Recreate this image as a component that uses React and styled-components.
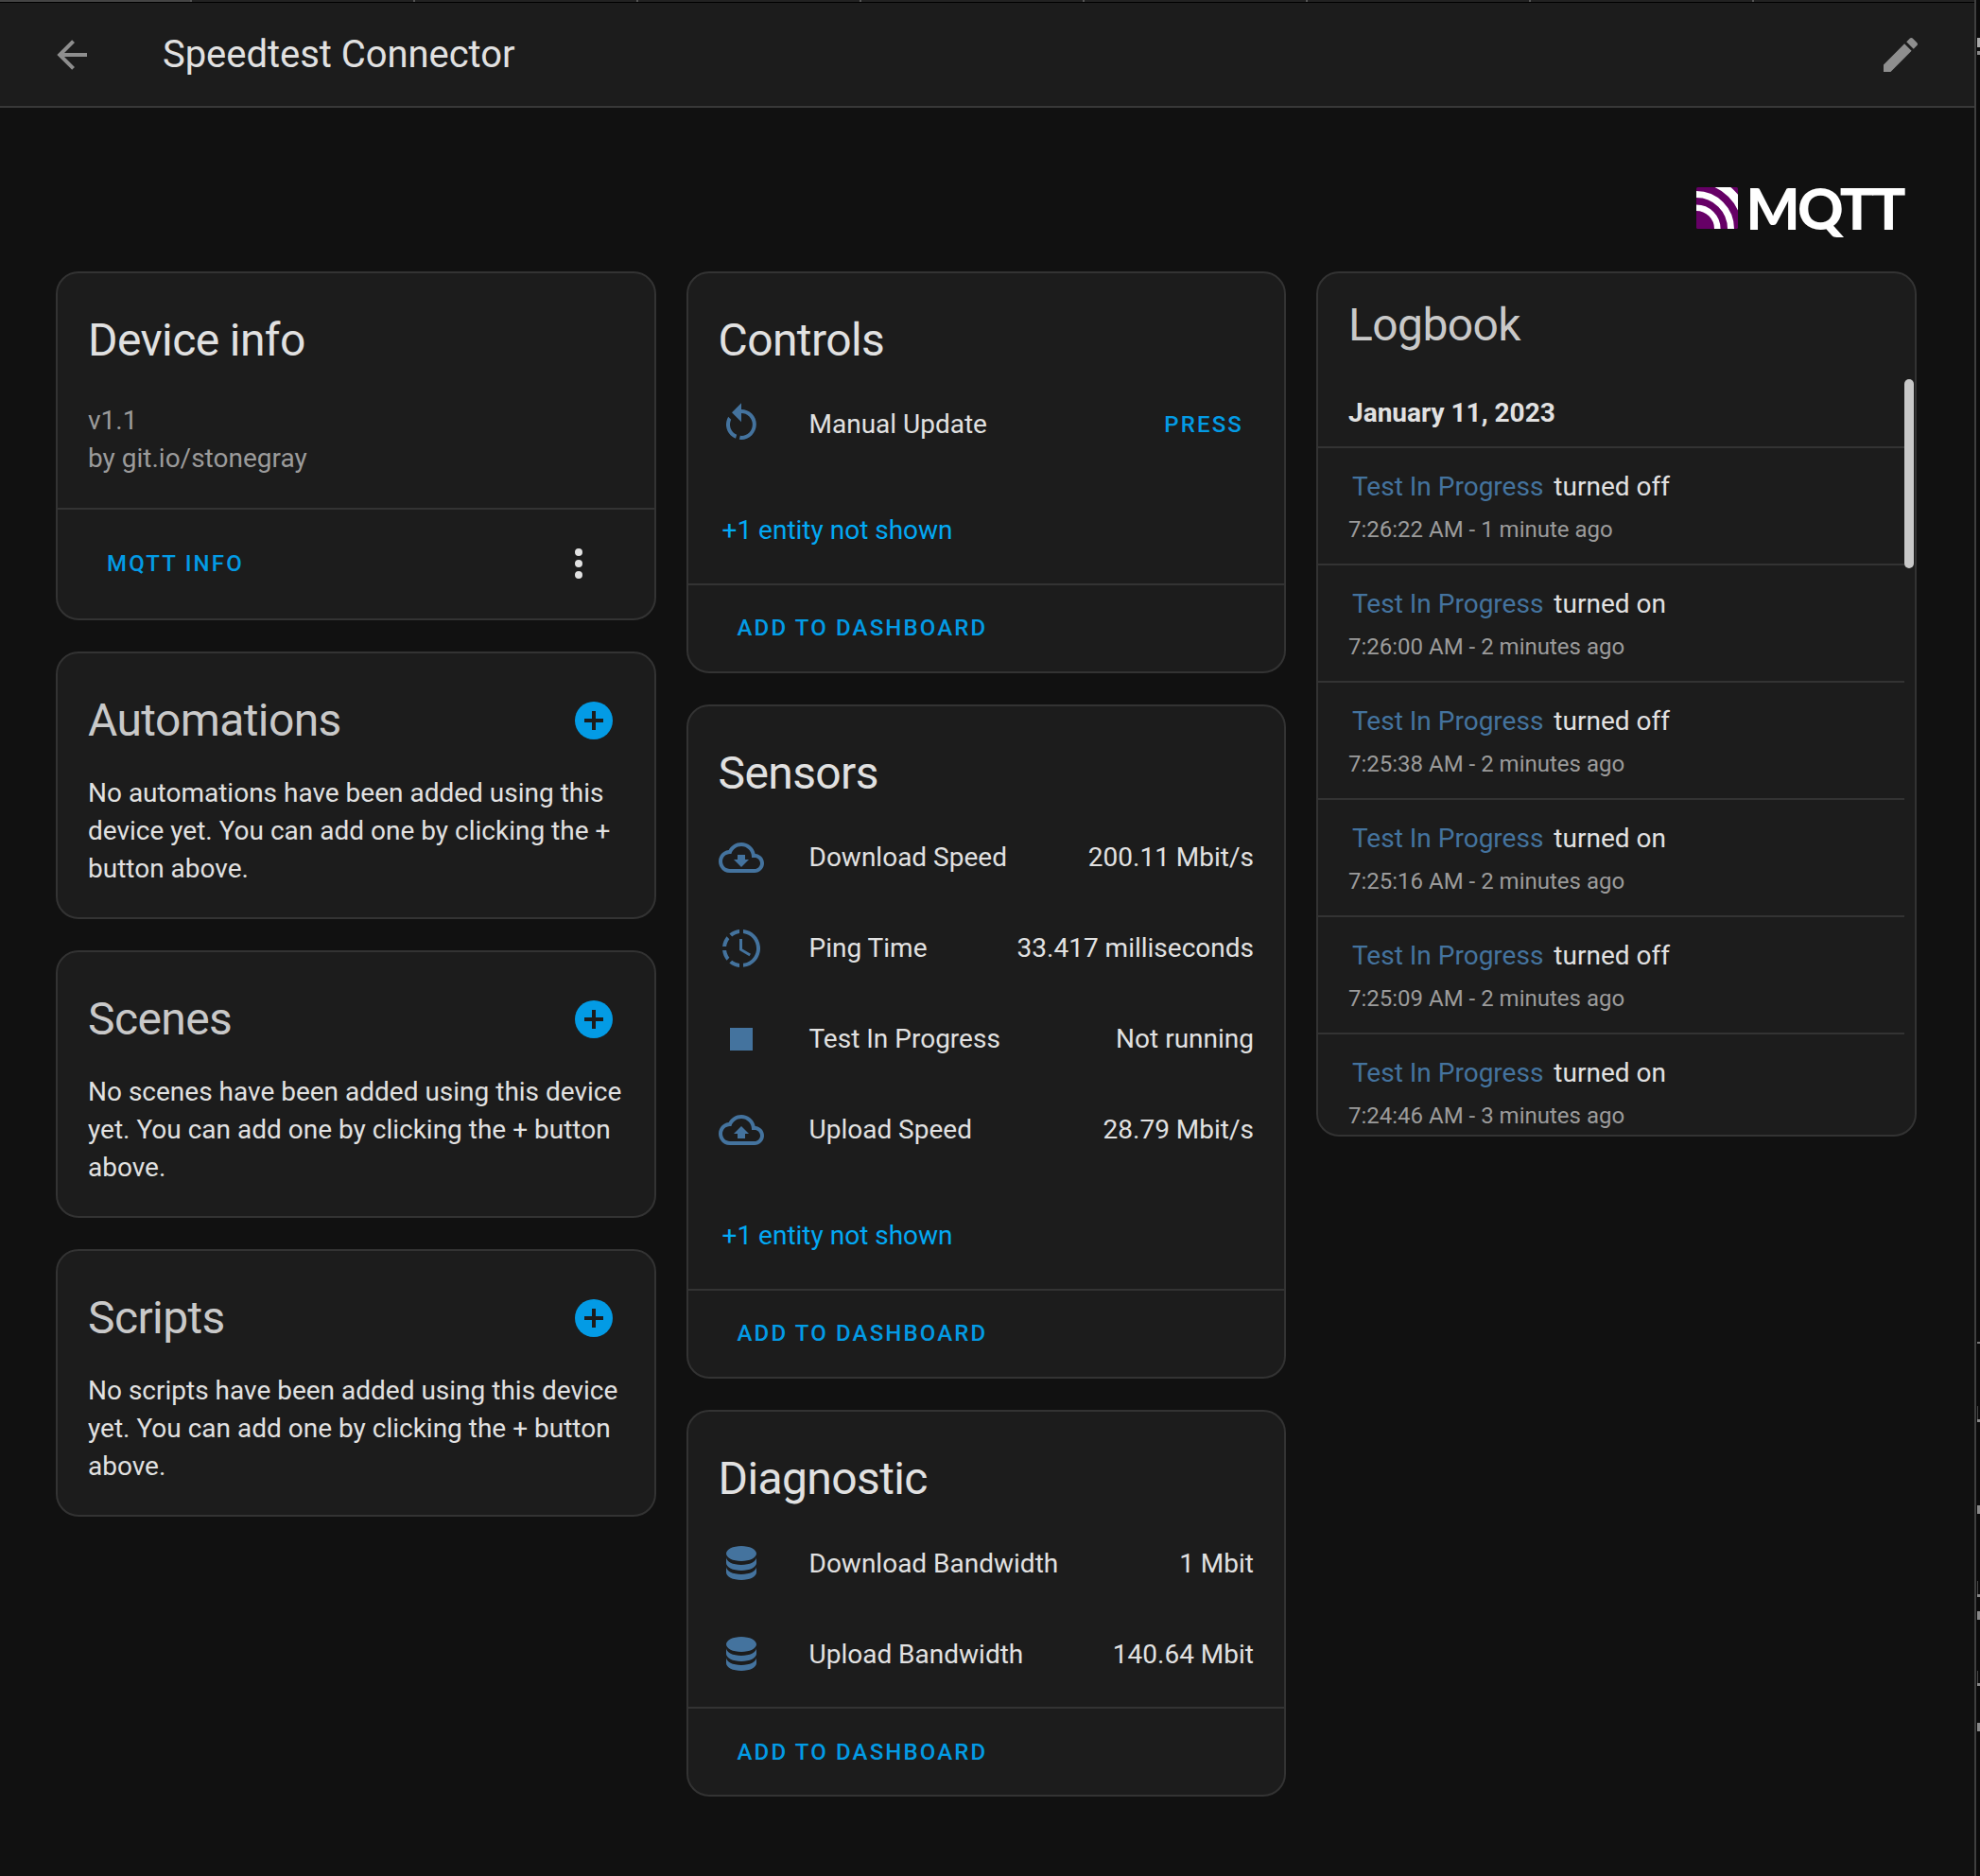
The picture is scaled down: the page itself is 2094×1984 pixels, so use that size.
import React from "react";
import styled, { createGlobalStyle } from "styled-components";

const Global = createGlobalStyle`
  html, body { margin: 0; padding: 0; background: #111111; }
  body { font-family: Roboto, "Liberation Sans", sans-serif; color: #e1e1e1; }
  * { box-sizing: border-box; }
`;

const P = {
  back: "M20,11V13H8L13.5,18.5L12.08,19.92L4.16,12L12.08,4.08L13.5,5.5L8,11H20Z",
  pencil: "M20.71,7.04C21.1,6.65 21.1,6 20.71,5.63L18.37,3.29C18,2.9 17.35,2.9 16.96,3.29L15.12,5.12L18.87,8.87M3,17.25V21H6.75L17.81,9.93L14.06,6.18L3,17.25Z",
  dots: "M12,16A2,2 0 0,1 14,18A2,2 0 0,1 12,20A2,2 0 0,1 10,18A2,2 0 0,1 12,16M12,10A2,2 0 0,1 14,12A2,2 0 0,1 12,14A2,2 0 0,1 10,12A2,2 0 0,1 12,10M12,4A2,2 0 0,1 14,6A2,2 0 0,1 12,8A2,2 0 0,1 10,6A2,2 0 0,1 12,4Z",
  restart: "M12,4C14.1,4 16.1,4.8 17.6,6.3C20.7,9.4 20.7,14.5 17.6,17.6C15.8,19.5 13.3,20.2 10.9,19.9L11.4,17.9C13.1,18.1 14.9,17.5 16.2,16.2C18.5,13.9 18.5,10.1 16.2,7.7C15.1,6.6 13.5,6 12,6V10.6L7,5.6L12,0.6V4M6.3,17.6C3.7,15 3.3,11 5.1,7.9L6.6,9.4C5.5,11.6 5.9,14.4 7.8,16.2C8.3,16.7 8.9,17.1 9.6,17.4L9,19.4C8,19 7.1,18.4 6.3,17.6Z",
  cloudDown: "M19.35 10.04C18.67 6.59 15.65 4 12 4C9.11 4 6.6 5.64 5.35 8.04C2.34 8.36 0 10.91 0 14C0 17.31 2.69 20 6 20H19C21.76 20 24 17.76 24 15C24 12.36 21.95 10.22 19.35 10.04M19 18H6C3.79 18 2 16.21 2 14S3.79 10 6 10H6.71C7.37 7.69 9.5 6 12 6C15.04 6 17.5 8.46 17.5 11.5V12H19C20.66 12 22 13.34 22 15S20.66 18 19 18M14 10.5H10V13H8L12 17L16 13H14V10.5Z",
  cloudUp: "M19.35 10.04C18.67 6.59 15.65 4 12 4C9.11 4 6.6 5.64 5.35 8.04C2.34 8.36 0 10.91 0 14C0 17.31 2.69 20 6 20H19C21.76 20 24 17.76 24 15C24 12.36 21.95 10.22 19.35 10.04M19 18H6C3.79 18 2 16.21 2 14S3.79 10 6 10H6.71C7.37 7.69 9.5 6 12 6C15.04 6 17.5 8.46 17.5 11.5V12H19C20.66 12 22 13.34 22 15S20.66 18 19 18M12 10L8 14H10V16.5H14V14H16L12 10Z",
  clock: "M13,2.03V2.05L13,4.05C17.39,4.59 20.5,8.58 19.96,12.97C19.5,16.61 16.64,19.5 13,19.93V21.93C18.5,21.38 22.5,16.5 21.95,11C21.5,6.25 17.73,2.5 13,2.03M11,2.06C9.05,2.25 7.19,3 5.67,4.26L7.1,5.74C8.22,4.84 9.57,4.26 11,4.06V2.06M4.26,5.67C3,7.19 2.25,9.04 2.05,11H4.05C4.24,9.58 4.8,8.23 5.69,7.1L4.26,5.67M2.06,13C2.26,14.96 3.03,16.81 4.27,18.33L5.69,16.9C4.81,15.77 4.24,14.42 4.06,13H2.06M7.1,18.37L5.67,19.74C7.18,21 9.04,21.79 11,22V20C9.58,19.82 8.23,19.25 7.1,18.37M12.5,7V12.25L17,14.92L16.25,16.15L11,13V7H12.5Z",
  stop: "M18,18H6V6H18V18Z",
  db: "M12,3C7.58,3 4,4.79 4,7C4,9.21 7.58,11 12,11C16.42,11 20,9.21 20,7C20,4.79 16.42,3 12,3M4,9V12C4,14.21 7.58,16 12,16C16.42,16 20,14.21 20,12V9C20,11.21 16.42,13 12,13C7.58,13 4,11.21 4,9M4,14V17C4,19.21 7.58,21 12,21C16.42,21 20,19.21 20,17V14C20,16.21 16.42,18 12,18C7.58,18 4,16.21 4,14Z",
};

const Glyph = styled.svg`
  width: 48px;
  height: 48px;
  flex: none;
  display: block;
  fill: ${(p) => p.$color};
`;
const Icon = ({ d, color = "#44739e" }) => (
  <Glyph viewBox="0 0 24 24" $color={color}><path d={d} /></Glyph>
);

const Page = styled.div`
  width: 2094px;
  height: 1984px;
  display: flex;
  background: #111111;
  overflow: hidden;
`;
const Main = styled.div`
  width: 2088px;
  display: flex;
  flex-direction: column;
`;
const Edge = styled.div`
  width: 6px;
  background: #0b0b0b;
  border-left: 2px solid #3f3f3f;
  padding-left: 1px;
  display: flex;
  flex-direction: column;
  align-items: flex-start;
`;
const EdgeMark = styled.div`
  flex: none;
  margin-top: ${(p) => p.$gap}px;
  height: ${(p) => p.$h}px;
  width: ${(p) => p.$w}px;
  background: ${(p) => p.$c};
`;
const TopStrip = styled.div`
  height: 3px;
  display: flex;
  background: #000;
  overflow: hidden;
`;
const Tab = styled.div`
  flex: none;
  width: ${(p) => (p.$first ? 203 : 236)}px;
  height: 2px;
  background: ${(p) => (p.$first ? "#444444" : "#222222")};
  border-right: 2px solid #555555;
`;
const Header = styled.header`
  height: 111px;
  display: flex;
  align-items: center;
  background: #1c1c1c;
  border-bottom: 2px solid #383838;
  padding: 0 54px 0 52px;
`;
const HeaderTitle = styled.h1`
  flex: 1;
  margin: 1px 0 0 72px;
  font-size: 40px;
  font-weight: 400;
  line-height: 48px;
  letter-spacing: -0.05px;
  color: #e1e1e1;
`;
const LogoRow = styled.div`
  height: 172.5px;
  padding: 84px 75px 0 0;
  display: flex;
  justify-content: flex-end;
  align-items: flex-start;
`;
const Logo = styled.div`
  display: flex;
  align-items: flex-start;
  gap: 8px;
`;
const LogoMark = styled.svg`
  width: 44px;
  height: 44px;
  display: block;
`;
const LogoText = styled.span`
  font-family: Lato, Inter, sans-serif;
  font-weight: 900;
  font-size: 60px;
  line-height: 44px;
  letter-spacing: -2.6px;
  color: #fff;
`;
const Columns = styled.div`
  display: grid;
  grid-template-columns: repeat(3, 634.5px);
  column-gap: 32px;
  padding-left: 59px;
  align-items: start;
`;
const Column = styled.div`
  display: flex;
  flex-direction: column;
  gap: 33.25px;
`;
const Card = styled.section`
  background: #1c1c1c;
  border: 2px solid #333333;
  border-radius: 24px;
  position: relative;
  overflow: hidden;
`;
const CardTitle = styled.h2`
  margin: 0;
  padding: 39px 32px 0;
  font-size: 48px;
  line-height: 64px;
  font-weight: 400;
  letter-spacing: -0.6px;
  color: ${(p) => (p.$dim ? "#c9c9c9" : "#e1e1e1")};
`;
const InfoBlock = styled.div`
  padding: 33px 32px 32px;
  font-size: 28px;
  line-height: 40px;
  color: #9b9b9b;
`;
const Footer = styled.div`
  border-top: 2px solid #333333;
  height: ${(p) => p.$h || 93}px;
  display: flex;
  align-items: center;
  justify-content: space-between;
  padding: 0 ${(p) => p.$right || 0}px 0 ${(p) => p.$left || 52}px;
`;
const TextButton = styled.span`
  font-size: 24px;
  font-weight: 500;
  letter-spacing: 2.15px;
  color: #039be5;
  text-transform: uppercase;
`;
const MoreBtn = styled.span`
  display: flex;
`;
const SectionHead = styled.div`
  display: flex;
  justify-content: space-between;
  align-items: flex-start;
  padding-right: 44px;
  & > h2 { flex: 1; padding-right: 0; }
`;
const AddBadge = styled.svg`
  width: 40px;
  height: 40px;
  margin-top: 51px;
  display: block;
`;
const Para = styled.p`
  margin: 0;
  padding: 25px 26px 31px 32px;
  font-size: 28px;
  line-height: 40px;
  color: #e1e1e1;
`;
const Rows = styled.div`
  padding-top: 9px;
  padding-bottom: ${(p) => p.$bottom ?? 0}px;
`;
const Row = styled.div`
  height: 96px;
  display: flex;
  align-items: center;
  padding: 0 32px;
  font-size: 28px;
  color: #e1e1e1;
`;
const RowName = styled.span`
  flex: 1;
  margin-left: 48px;
`;
const RowValue = styled.span``;
const PressBtn = styled(TextButton)`
  margin-right: 11px;
`;
const MoreLink = styled.div`
  padding: 44px 0 36px 36px;
  font-size: 28px;
  line-height: 40px;
  color: #03a9f4;
`;
const LogTitle = styled(CardTitle)`
  padding-top: 23px;
`;
const LogDate = styled.div`
  padding: 41px 32px 15px;
  font-size: 28px;
  font-weight: 700;
  line-height: 40px;
  color: #e1e1e1;
  border-bottom: 2px solid #333333;
  margin-right: 11px;
`;
const LogList = styled.div`
  height: 726px;
  overflow: hidden;
  margin-right: 11px;
`;
const LogEntry = styled.div`
  height: 124px;
  padding: 21px 0 0 32px;
  border-bottom: 2px solid #333333;
`;
const LogLine = styled.div`
  font-size: 28px;
  line-height: 40px;
  padding-left: 4px;
  display: flex;
  gap: 11px;
`;
const LogName = styled.span`
  color: #44739e;
`;
const LogTime = styled.div`
  font-size: 24px;
  line-height: 32px;
  margin-top: 9px;
  color: #9b9b9b;
`;
const Scrollbar = styled.div`
  position: absolute;
  top: 112px;
  right: 1px;
  width: 10px;
  height: 200px;
  border-radius: 5px;
  background: #c8c8c8;
`;

const AddButton = () => (
  <AddBadge viewBox="0 0 40 40">
    <circle cx="20" cy="20" r="20" fill="#039be5" />
    <path d="M10 18h8v-8h4v8h8v4h-8v8h-4v-8h-8z" fill="#1c1c1c" />
  </AddBadge>
);

const Empty = ({ title, children }) => (
  <Card>
    <SectionHead>
      <CardTitle $dim>{title}</CardTitle>
      <AddButton />
    </SectionHead>
    <Para>{children}</Para>
  </Card>
);

const Entity = ({ icon, name, value }) => (
  <Row>
    <Icon d={icon} />
    <RowName>{name}</RowName>
    <RowValue>{value}</RowValue>
  </Row>
);

const log = [
  ["turned off", "7:26:22 AM - 1 minute ago"],
  ["turned on", "7:26:00 AM - 2 minutes ago"],
  ["turned off", "7:25:38 AM - 2 minutes ago"],
  ["turned on", "7:25:16 AM - 2 minutes ago"],
  ["turned off", "7:25:09 AM - 2 minutes ago"],
  ["turned on", "7:24:46 AM - 3 minutes ago"],
];

const edgeMarks = [
  [40, 10, 3, "#aaaaaa"], [4, 4, 3, "#888888"], [1361, 2, 3, "#777777"],
  [66, 14, 1, "#444444"], [0, 3, 3, "#888888"], [88, 9, 3, "#888888"],
  [71, 14, 1, "#444444"], [0, 3, 3, "#888888"], [15, 9, 3, "#888888"],
  [54, 13, 1, "#444444"], [0, 3, 3, "#888888"], [39, 9, 3, "#888888"],
];

export default function App() {
  return (
    <Page>
      <Global />
      <Main>
        <TopStrip>
          {Array.from({ length: 9 }, (_, i) => <Tab key={i} $first={i === 0} />)}
        </TopStrip>
        <Header>
          <Icon d={P.back} color="#8e8e8e" />
          <HeaderTitle>Speedtest Connector</HeaderTitle>
          <Icon d={P.pencil} color="#8e8e8e" />
        </Header>
        <LogoRow>
          <Logo>
            <LogoMark viewBox="0 0 44 44">
              <defs>
                <clipPath id="lg"><rect width="44" height="44" rx="1.5" /></clipPath>
              </defs>
              <g clipPath="url(#lg)" fill="none" stroke="#fff">
                <rect width="44" height="44" fill="#660066" stroke="none" />
                <circle cx="0" cy="44" r="22.3" strokeWidth="6.6" />
                <circle cx="0" cy="44" r="36.5" strokeWidth="7" />
                <circle cx="0" cy="44" r="52.5" strokeWidth="9" />
              </g>
            </LogoMark>
            <LogoText>MQTT</LogoText>
          </Logo>
        </LogoRow>
        <Columns>
          <Column>
            <Card>
              <CardTitle>Device info</CardTitle>
              <InfoBlock>v1.1<br />by git.io/stonegray</InfoBlock>
              <Footer $h={117} $left={52} $right={56}>
                <TextButton>MQTT Info</TextButton>
                <MoreBtn><Icon d={P.dots} color="#e1e1e1" /></MoreBtn>
              </Footer>
            </Card>
            <Empty title="Automations">No automations have been added using this device yet. You can add one by clicking the + button above.</Empty>
            <Empty title="Scenes">No scenes have been added using this device yet. You can add one by clicking the + button above.</Empty>
            <Empty title="Scripts">No scripts have been added using this device yet. You can add one by clicking the + button above.</Empty>
          </Column>
          <Column>
            <Card>
              <CardTitle>Controls</CardTitle>
              <Rows>
                <Row>
                  <Icon d={P.restart} />
                  <RowName>Manual Update</RowName>
                  <PressBtn>Press</PressBtn>
                </Row>
              </Rows>
              <MoreLink>+1 entity not shown</MoreLink>
              <Footer><TextButton>Add to dashboard</TextButton></Footer>
            </Card>
            <Card>
              <CardTitle>Sensors</CardTitle>
              <Rows>
                <Entity icon={P.cloudDown} name="Download Speed" value="200.11 Mbit/s" />
                <Entity icon={P.clock} name="Ping Time" value="33.417 milliseconds" />
                <Entity icon={P.stop} name="Test In Progress" value="Not running" />
                <Entity icon={P.cloudUp} name="Upload Speed" value="28.79 Mbit/s" />
              </Rows>
              <MoreLink>+1 entity not shown</MoreLink>
              <Footer><TextButton>Add to dashboard</TextButton></Footer>
            </Card>
            <Card>
              <CardTitle>Diagnostic</CardTitle>
              <Rows $bottom={8}>
                <Entity icon={P.db} name="Download Bandwidth" value="1 Mbit" />
                <Entity icon={P.db} name="Upload Bandwidth" value="140.64 Mbit" />
              </Rows>
              <Footer><TextButton>Add to dashboard</TextButton></Footer>
            </Card>
          </Column>
          <Column>
            <Card>
              <LogTitle $dim>Logbook</LogTitle>
              <LogDate>January 11, 2023</LogDate>
              <LogList>
                {log.map(([state, time]) => (
                  <LogEntry key={time}>
                    <LogLine><LogName>Test In Progress</LogName><span>{state}</span></LogLine>
                    <LogTime>{time}</LogTime>
                  </LogEntry>
                ))}
              </LogList>
              <Scrollbar />
            </Card>
          </Column>
        </Columns>
      </Main>
      <Edge>
        {edgeMarks.map(([gap, h, w, c], i) => <EdgeMark key={i} $gap={gap} $h={h} $w={w} $c={c} />)}
      </Edge>
    </Page>
  );
}
